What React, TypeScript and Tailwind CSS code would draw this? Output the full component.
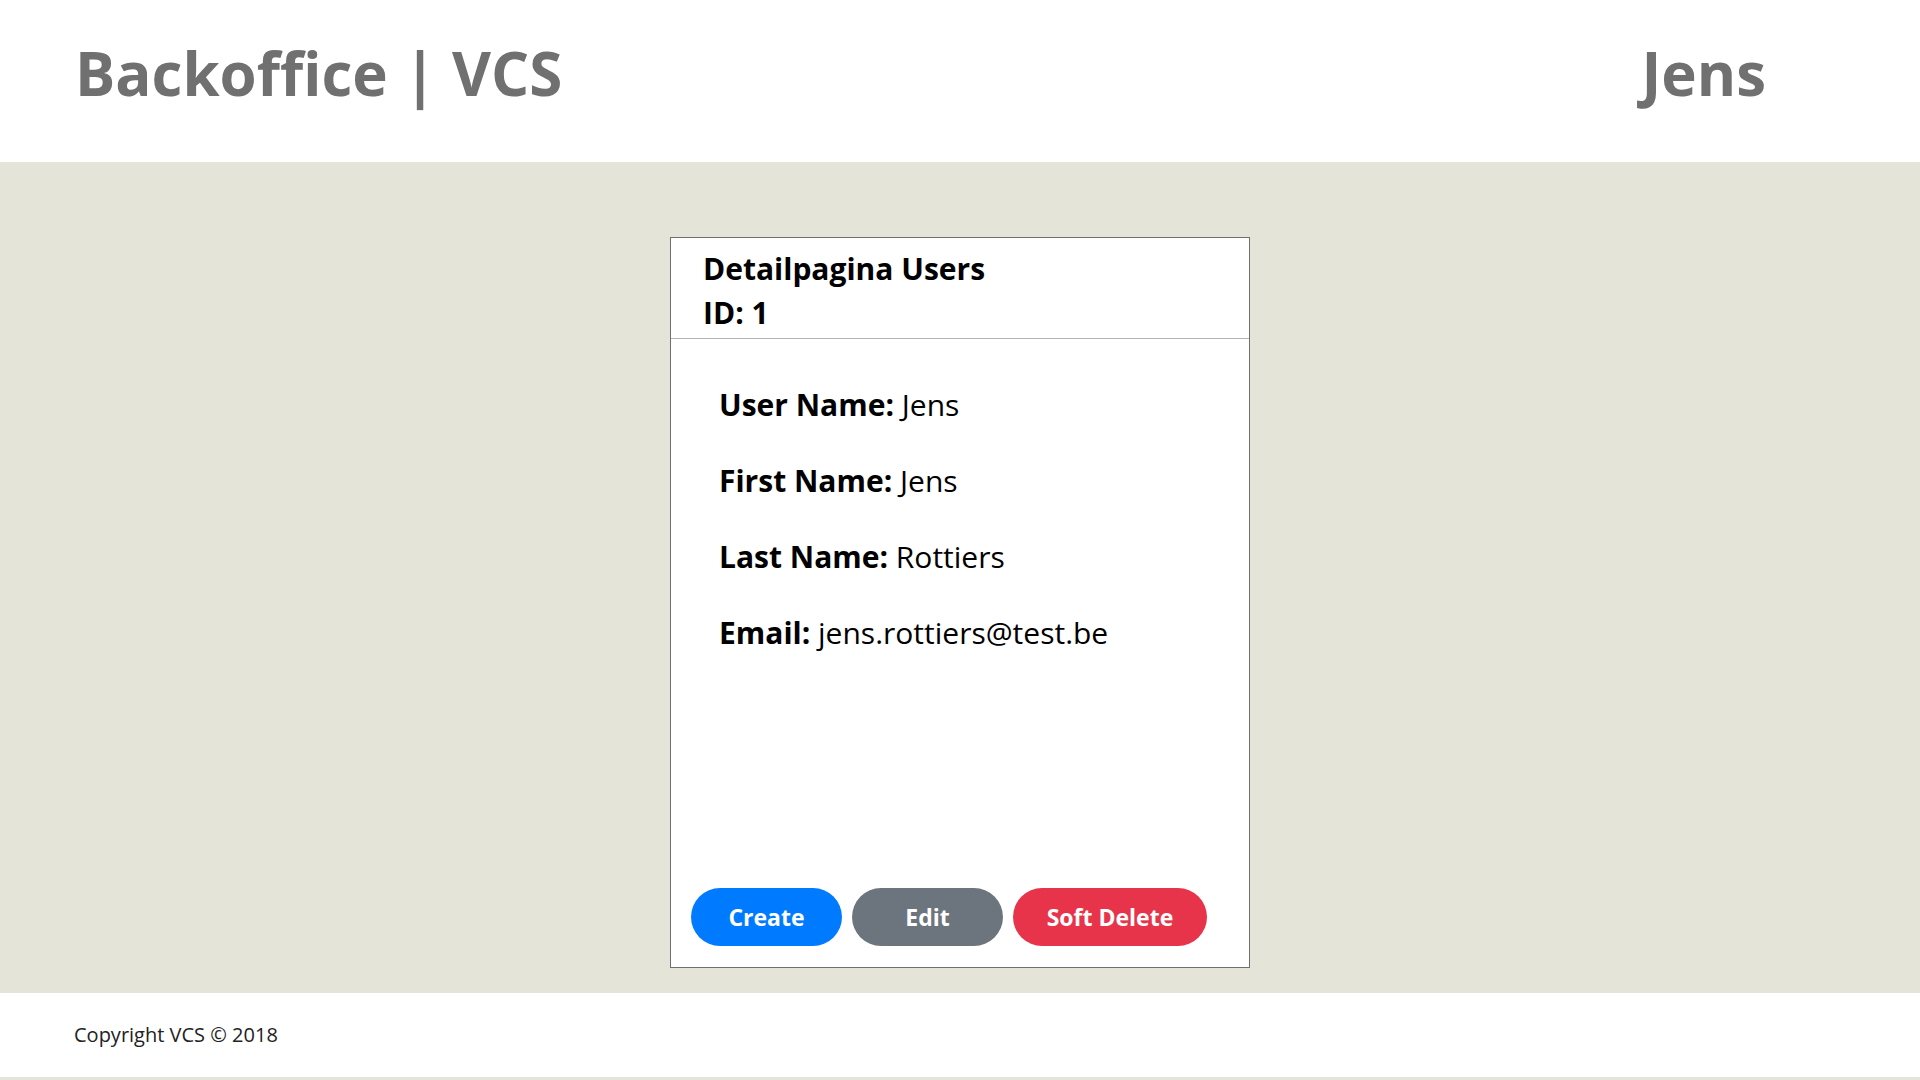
import React from "react";

const font = { fontFamily: '"Open Sans", "Noto Sans", sans-serif' };

function Field({ label, value }: { label: string; value: string }) {
  return (
    <div className="h-[76px] text-[30px] leading-[76px] text-black">
      <span className="font-bold">{label}</span> <span>{value}</span>
    </div>
  );
}

export default function App() {
  return (
    <div className="w-[1920px] h-[1080px] flex flex-col bg-[#e4e5d8]" style={font}>
      <header className="h-[162px] bg-white flex justify-between pl-[75px] pr-[154px] pt-[43px] text-[60px] leading-none font-bold text-[#707070]">
        <div>Backoffice | VCS</div>
        <div>Jens</div>
      </header>
      <main className="h-[831px] flex justify-center pt-[75px]">
        <div className="w-[580px] h-[731px] bg-white border border-[#707070] flex flex-col">
          <div className="pl-[32px] pt-[9px] pb-[3px] border-b border-[#b4b4b4] text-[30px] leading-[44px] font-bold text-black">
            <div>Detailpagina Users</div>
            <div>ID: 1</div>
          </div>
          <div className="flex-1 flex flex-col pl-[48px] pt-[28px]">
            <Field label="User Name:" value="Jens" />
            <Field label="First Name:" value="Jens" />
            <Field label="Last Name:" value="Rottiers" />
            <Field label="Email:" value="jens.rottiers@test.be" />
          </div>
          <div className="flex gap-[10px] pl-[20px] pb-[21px]">
            <button className="w-[151px] h-[58px] rounded-full bg-[#007bff] text-white font-bold text-[23px]">Create</button>
            <button className="w-[151px] h-[58px] rounded-full bg-[#6c757d] text-white font-bold text-[23px]">Edit</button>
            <button className="w-[194px] h-[58px] rounded-full bg-[#e8344a] text-white font-bold text-[23px]">Soft Delete</button>
          </div>
        </div>
      </main>
      <footer className="h-[84px] bg-white flex items-center pl-[74px] text-[20px] text-[#222]">
        Copyright VCS © 2018
      </footer>
    </div>
  );
}
